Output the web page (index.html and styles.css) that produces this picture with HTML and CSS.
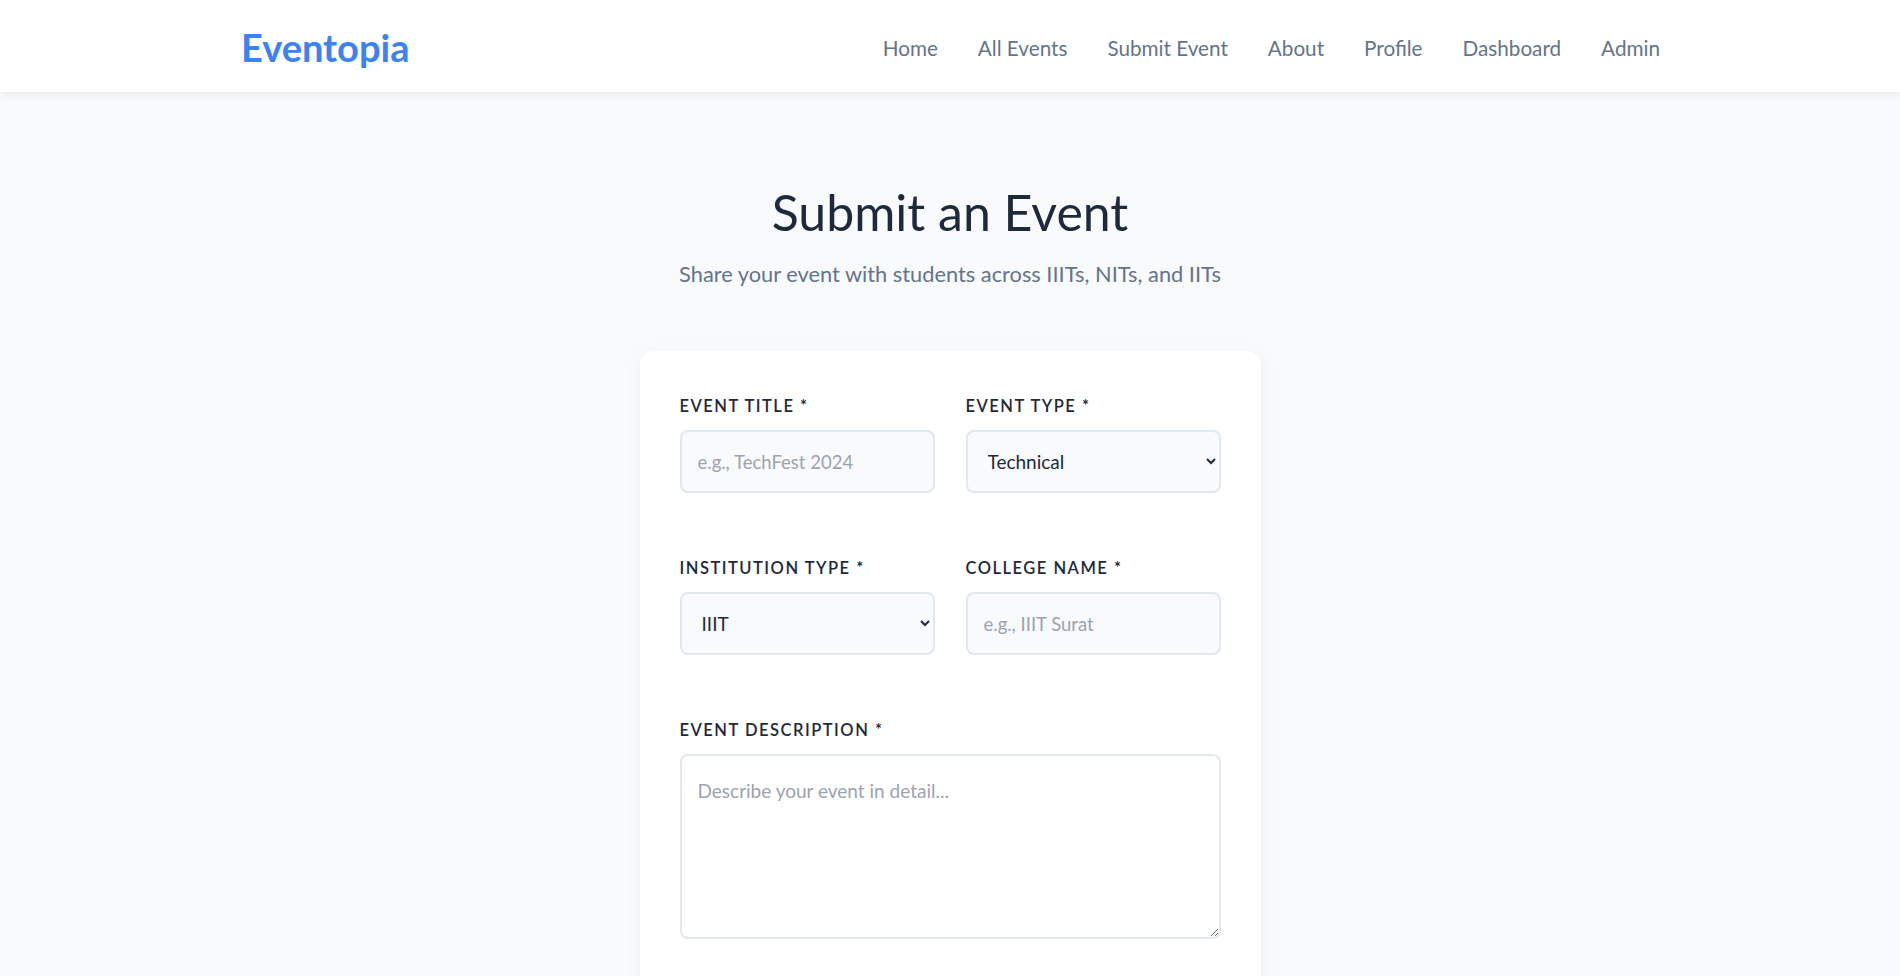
FILE: index.html
```html
<!DOCTYPE html>
<html lang="en">
<head>
<meta charset="utf-8">
<title>Submit Event - Eventopia</title>
<link rel="stylesheet" href="styles.css">
</head>
<body>
<header class="site-header">
  <div class="header-inner">
    <a class="logo" href="#">Eventopia</a>
    <nav class="main-nav">
      <a href="#">Home</a>
      <a href="#">All Events</a>
      <a href="#">Submit Event</a>
      <a href="#">About</a>
      <a href="#">Profile</a>
      <a href="#">Dashboard</a>
      <a href="#">Admin</a>
    </nav>
  </div>
</header>
<main class="page">
  <h1 class="page-title">Submit an Event</h1>
  <p class="page-subtitle">Share your event with students across IIITs, NITs, and IITs</p>
  <form class="form-card">
    <div class="form-row">
      <div class="form-group">
        <label for="title">Event Title *</label>
        <input id="title" type="text" placeholder="e.g., TechFest 2024">
      </div>
      <div class="form-group">
        <label for="type">Event Type *</label>
        <select id="type">
          <option>Technical</option>
          <option>Cultural</option>
          <option>Sports</option>
        </select>
      </div>
    </div>
    <div class="form-row">
      <div class="form-group">
        <label for="inst">Institution Type *</label>
        <select id="inst">
          <option>IIIT</option>
          <option>NIT</option>
          <option>IIT</option>
        </select>
      </div>
      <div class="form-group">
        <label for="college">College Name *</label>
        <input id="college" type="text" placeholder="e.g., IIIT Surat">
      </div>
    </div>
    <div class="form-group">
      <label for="desc">Event Description *</label>
      <textarea id="desc" placeholder="Describe your event in detail..."></textarea>
    </div>
  </form>
</main>
</body>
</html>
```

FILE: styles.css
```css
* { box-sizing: border-box; }

html, body {
  margin: 0;
  padding: 0;
}

body {
  font-family: Lato, "Open Sans", sans-serif;
  background: #f8fafc;
  color: #1e293b;
}

.site-header {
  background: #ffffff;
  height: 92px;
  box-shadow: 0 2px 10px rgba(0, 0, 0, 0.08);
  position: relative;
}

.header-inner {
  height: 100%;
  padding: 4px 240px 0 241px;
  display: flex;
  align-items: center;
  justify-content: space-between;
}

.logo {
  font-size: 38px;
  font-weight: 700;
  color: #3b82f6;
  text-decoration: none;
  line-height: 1;
  padding-bottom: 2px;
}

.main-nav {
  display: flex;
  gap: 40px;
}

.main-nav a {
  font-size: 20.7px;
  color: #64748b;
  text-decoration: none;
}

.page {
  padding-top: 91px;
  padding-bottom: 60px;
  display: flex;
  flex-direction: column;
  align-items: center;
}

.page-title {
  margin: 0;
  font-size: 50px;
  font-weight: 400;
  line-height: 58px;
  color: #1e293b;
}

.page-subtitle {
  margin: 18px 0 0;
  font-size: 21.8px;
  line-height: 30px;
  color: #64748b;
}

.form-card {
  margin-top: 62px;
  width: 621px;
  background: #ffffff;
  border-radius: 14px;
  box-shadow: 0 4px 20px rgba(15, 23, 42, 0.05);
  padding: 44px 40px 40px;
}

.form-row {
  display: grid;
  grid-template-columns: 1fr 1fr;
  gap: 31px;
}

.form-group {
  margin-bottom: 64px;
}

.form-group label {
  display: block;
  font-size: 16.5px;
  line-height: 22px;
  font-weight: 600;
  letter-spacing: 1.5px;
  text-transform: uppercase;
  color: #1e293b;
  margin-bottom: 13px;
}

.form-group input,
.form-group select,
.form-group textarea {
  display: block;
  width: 100%;
  font-family: inherit;
  font-size: 19px;
  color: #1e293b;
  border: 2px solid #e2e8f0;
  border-radius: 8px;
  background: #f8fafc;
  outline: none;
}

.form-group input {
  height: 63px;
  padding: 0 16px;
  font-size: 18.5px;
}

.form-group select {
  height: 63px;
  padding: 0 20px 0 16px;
}

.form-group textarea {
  height: 185px;
  padding: 20px 16px;
  line-height: 1.6;
  font-size: 19px;
  background: #ffffff;
  resize: vertical;
}

.form-group input::placeholder,
.form-group textarea::placeholder {
  color: #9ca3af;
}
```
